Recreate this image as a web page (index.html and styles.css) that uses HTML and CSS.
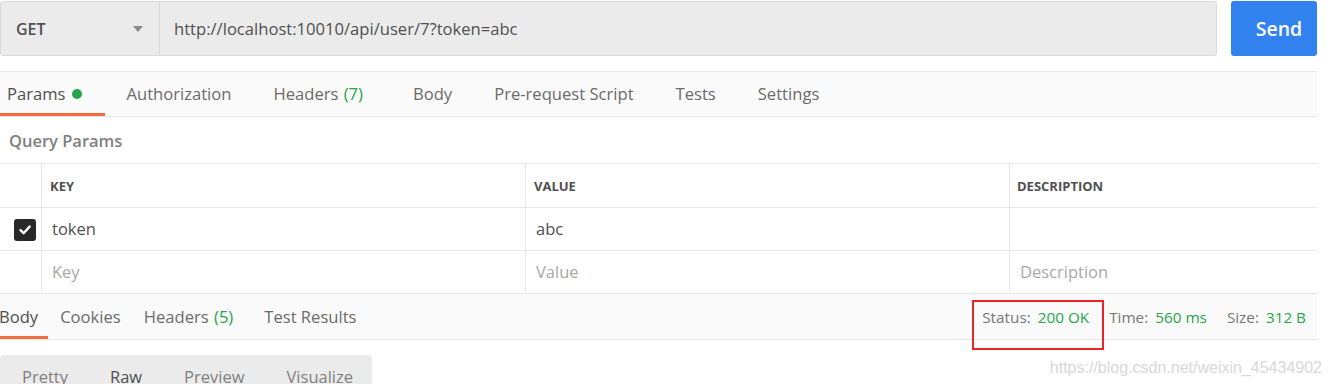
FILE: index.html
```html
<!DOCTYPE html>
<html>
<head>
<meta charset="utf-8">
<link rel="stylesheet" href="styles.css">
</head>
<body>
<div class="page">
  <div class="urlbar">
    <div class="req">
      <div class="method"><span>GET</span><span class="caret"></span></div>
      <div class="url">http://localhost:10010/api/user/7?token=abc</div>
    </div>
    <button class="send">Send</button>
  </div>

  <div class="tabs">
    <div class="tab active first"><span>Params</span><span class="dot"></span></div>
    <div class="tab"><span>Authorization</span></div>
    <div class="tab"><span>Headers <span class="count">(7)</span></span></div>
    <div class="tab"><span>Body</span></div>
    <div class="tab"><span>Pre-request Script</span></div>
    <div class="tab"><span>Tests</span></div>
    <div class="tab"><span>Settings</span></div>
  </div>

  <div class="qp">Query Params</div>

  <div class="table">
    <div class="row head">
      <div class="cell chk"></div>
      <div class="cell key">KEY</div>
      <div class="cell val">VALUE</div>
      <div class="cell desc">DESCRIPTION</div>
    </div>
    <div class="row">
      <div class="cell chk"><span class="box"><svg width="14" height="14" viewBox="0 0 14 14"><path d="M2.5 7.2 L5.6 10.2 L11.6 3.6" fill="none" stroke="#fff" stroke-width="2.4" stroke-linecap="round" stroke-linejoin="round"/></svg></span></div>
      <div class="cell key txt">token</div>
      <div class="cell val txt">abc</div>
      <div class="cell desc txt"></div>
    </div>
    <div class="row">
      <div class="cell chk"></div>
      <div class="cell key ph">Key</div>
      <div class="cell val ph">Value</div>
      <div class="cell desc ph">Description</div>
    </div>
  </div>

  <div class="resp">
    <div class="rtabs">
      <div class="rtab active first"><span>Body</span></div>
      <div class="rtab"><span>Cookies</span></div>
      <div class="rtab"><span>Headers <span class="count">(5)</span></span></div>
      <div class="rtab"><span>Test Results</span></div>
    </div>
    <div class="meta">
      <span class="m status">Status: <b>200 OK</b></span>
      <span class="m">Time: <b>560 ms</b></span>
      <span class="m">Size: <b>312 B</b></span>
    </div>
  </div>

  <div class="bottom">
    <div class="modes">
      <span class="mode">Pretty</span>
      <span class="mode sel">Raw</span>
      <span class="mode">Preview</span>
      <span class="mode">Visualize</span>
    </div>
    <div class="wm">https://blog.csdn.net/weixin_45434902</div>
  </div>
</div>
</body>
</html>
```

FILE: styles.css
```css
* { box-sizing: border-box; }
html, body { margin: 0; padding: 0; background: #fff; }
body { font-family: "Open Sans", "Noto Sans", sans-serif; color: #505050; overflow: hidden; }
.page { width: 1332px; height: 384px; overflow: hidden; position: relative; }
.page > div:not(.bottom) { width: 1317px; }

.urlbar { display: flex; height: 56px; padding-top: 1px; }
.req { flex: 1; display: flex; border: 1px solid #d9d9d9; border-radius: 3px; background: #ebebeb; }
.method { width: 159px; border-right: 1px solid #d9d9d9; display: flex; align-items: center; justify-content: space-between; padding: 0 16px 0 15px; font-size: 16px; font-weight: 600; color: #505050; }
.caret { width: 0; height: 0; border-left: 5px solid transparent; border-right: 5px solid transparent; border-top: 6px solid #8a8a8a; margin-top: 1px; }
.url { flex: 1; display: flex; align-items: center; padding-left: 14px; font-size: 16.6px; color: #505050; }
.send { margin-left: 14px; width: 86px; border: none; border-radius: 3px; background: #3181ef; color: #fff; font-family: "Open Sans", sans-serif; font-size: 19.5px; font-weight: 600; padding: 0 0 0 10px; }

.tabs { margin-top: 15px; height: 46px; display: flex; background: #fafafa; border-top: 1px solid #e6e6e6; border-bottom: 1px solid #e6e6e6; }
.tab { display: flex; align-items: center; padding: 1px 21px 0 21px; font-size: 16.6px; color: #6b6b6b; border-bottom: 3px solid transparent; }
.tab.first { padding-left: 7px; padding-right: 23px; }
.tab.active { color: #505050; border-bottom-color: #f26b3a; }
.dot { display: inline-block; width: 10px; height: 10px; border-radius: 50%; background: #26a54a; margin-left: 7px; margin-top: 1px; }
.count { color: #26a54a; margin-left: 1px; margin-right: 8px; }

.qp { height: 46px; display: flex; align-items: center; padding-left: 9px; font-size: 16.5px; font-weight: 600; color: #808080; }

.table { border-top: 1px solid #e8e8e8; }
.row { display: flex; height: 43px; border-bottom: 1px solid #e8e8e8; }
.row.head { height: 44px; }
.cell { display: flex; align-items: center; border-right: 1px solid #e8e8e8; font-size: 16.5px; }
.cell:last-child { border-right: none; }
.chk { width: 42px; justify-content: center; padding-left: 8px; padding-top: 1px; }
.key { width: 484px; padding-left: 8px; }
.val { width: 484px; padding-left: 8px; }
.desc { flex: 1; padding-left: 7px; }
.head .cell { font-size: 13px; font-weight: 700; color: #505050; }
.txt { color: #505050; padding-left: 10px; padding-bottom: 1px; }
.ph { color: #a8a8a8; padding-left: 10px; padding-bottom: 1px; }
.box { width: 22px; height: 22px; border-radius: 3px; background: #282828; display: flex; align-items: center; justify-content: center; }

.resp { height: 46px; display: flex; justify-content: space-between; background: #fafafa; border-bottom: 1px solid #e6e6e6; }
.rtabs { display: flex; margin-left: -1px; }
.rtab { display: flex; align-items: center; padding: 2px 11px 0 12px; font-size: 16.6px; color: #6b6b6b; border-bottom: 3px solid transparent; }
.rtab.first { padding-left: 0; padding-right: 10px; }
.rtab.active { color: #505050; border-bottom-color: #f26b3a; }
.meta { display: flex; align-items: center; padding-right: 11px; font-size: 15.3px; color: #777; gap: 20px; }
.m b { font-weight: 400; color: #26a54a; margin-left: 3px; }
.status { position: relative; }
.status::after { content: ""; position: absolute; left: -10px; top: -7px; right: -15px; height: 46px; border: 2px solid #e8262a; }

.bottom { display: flex; justify-content: space-between; padding-top: 15px; position: relative; }
.modes { width: 372px; height: 40px; background: #ebebeb; border-radius: 4px 4px 0 0; display: flex; align-items: flex-start; padding: 10px 0 0 22px; font-size: 16.5px; color: #808080; }
.mode { margin-right: 42px; }
.mode.sel { color: #505050; }
.wm { position: absolute; right: 10px; top: 19px; font-family: "Liberation Sans", Arial, sans-serif; font-size: 16px; color: #d8d8d8; }
```
